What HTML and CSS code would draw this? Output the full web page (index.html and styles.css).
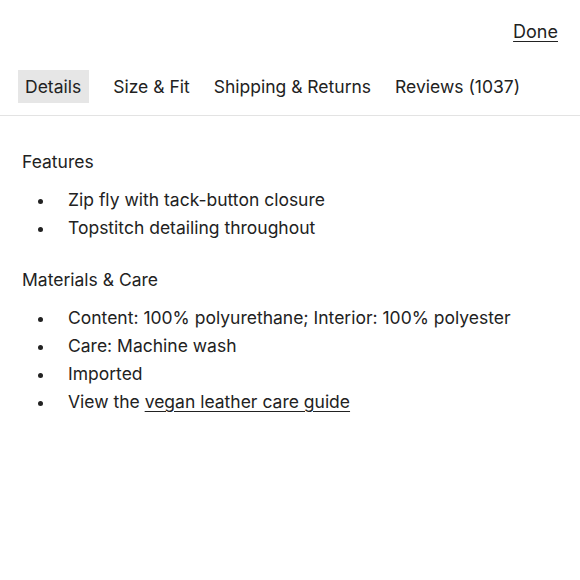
FILE: index.html
```html
<!DOCTYPE html>
<html>
<head>
<meta charset="utf-8">
<link rel="stylesheet" href="styles.css">
</head>
<body>
<div class="page">
  <div class="topbar"><a class="done" href="#">Done</a></div>
  <nav class="tabs">
    <span class="tab active">Details</span>
    <span class="tab">Size &amp; Fit</span>
    <span class="tab">Shipping &amp; Returns</span>
    <span class="tab">Reviews (1037)</span>
  </nav>
  <main class="content">
    <h2 class="heading">Features</h2>
    <ul class="list">
      <li>Zip fly with tack-button closure</li>
      <li>Topstitch detailing throughout</li>
    </ul>
    <h2 class="heading">Materials &amp; Care</h2>
    <ul class="list">
      <li>Content: 100% polyurethane; Interior: 100% polyester</li>
      <li>Care: Machine wash</li>
      <li>Imported</li>
      <li><span>View the <a class="link" href="#">vegan leather care guide</a></span></li>
    </ul>
  </main>
</div>
</body>
</html>
```
FILE: styles.css
```css
html, body {
  margin: 0;
  padding: 0;
  background: #fff;
}
body {
  font-family: "Inter", "Liberation Sans", sans-serif;
  color: #222;
  font-size: 17.5px;
}
.page {
  width: 580px;
}
.topbar {
  display: flex;
  justify-content: flex-end;
  padding: 20px 22px 0 0;
  height: 50px;
  box-sizing: border-box;
}
.done {
  color: #222;
  font-size: 18px;
  text-decoration: underline;
  text-underline-offset: 3px;
  line-height: 24px;
}
.tabs {
  display: flex;
  gap: 10px;
  padding: 20px 0 12px 18px;
  border-bottom: 1px solid #e3e3e3;
}
.tab {
  padding: 4px 7px;
  line-height: 25px;
  white-space: nowrap;
}
.tab.active {
  background: #e6e6e6;
  padding-right: 8px;
  margin-right: 7px;
}
.content {
  padding: 34px 22px 0 22px;
}
.heading {
  font-size: 17.5px;
  font-weight: 400;
  margin: 0 0 12px 0;
  line-height: 24px;
}
.list {
  list-style: none;
  margin: 0 0 26px 0;
  padding: 0;
}
.list li {
  display: flex;
  align-items: center;
  line-height: 28px;
}
.list li::before {
  content: "";
  flex: none;
  width: 5px;
  height: 5px;
  border-radius: 50%;
  background: #222;
  margin: 2px 25px 0 16px;
}
.link {
  color: #222;
  text-decoration: underline;
  text-underline-offset: 3px;
}
```
